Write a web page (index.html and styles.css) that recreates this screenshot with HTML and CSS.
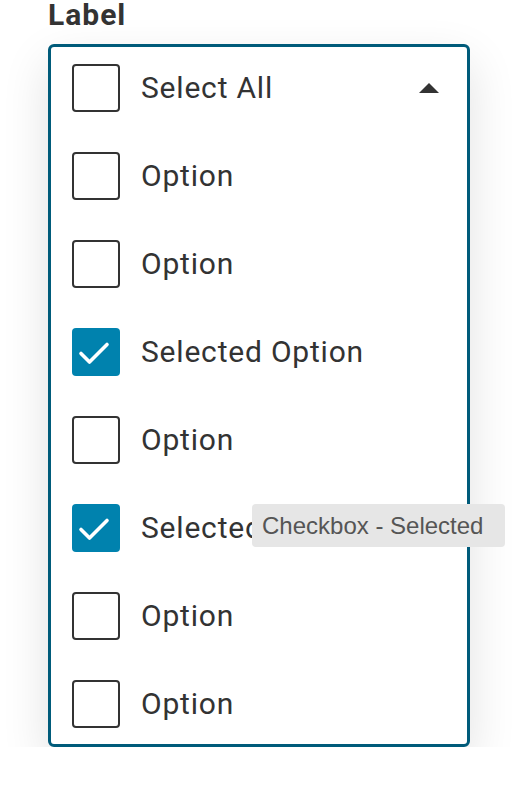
FILE: index.html
```html
<!DOCTYPE html>
<html>
<head>
<meta charset="utf-8">
<link rel="stylesheet" href="styles.css">
</head>
<body>
<div class="field">
  <div class="label">Label</div>
  <div class="menu">
    <div class="row">
      <span class="box"></span><span class="text">Select All</span>
      <span class="caret"></span>
    </div>
    <div class="row"><span class="box"></span><span class="text">Option</span></div>
    <div class="row"><span class="box"></span><span class="text">Option</span></div>
    <div class="row"><span class="box checked"><svg viewBox="0 0 48 48" width="48" height="48"><path d="M9 25.5 L17.5 34 L35 16.5" fill="none" stroke="#fff" stroke-width="3.6" stroke-linecap="round" stroke-linejoin="round"/></svg></span><span class="text">Selected Option</span></div>
    <div class="row"><span class="box"></span><span class="text">Option</span></div>
    <div class="row tip-row"><span class="box checked"><svg viewBox="0 0 48 48" width="48" height="48"><path d="M9 25.5 L17.5 34 L35 16.5" fill="none" stroke="#fff" stroke-width="3.6" stroke-linecap="round" stroke-linejoin="round"/></svg></span><span class="text">Selected Option</span>
      <span class="tooltip">Checkbox - Selected</span>
    </div>
    <div class="row"><span class="box"></span><span class="text">Option</span></div>
    <div class="row"><span class="box"></span><span class="text">Option</span></div>
  </div>
</div>
</body>
</html>
```

FILE: styles.css
```css
html, body {
  margin: 0;
  padding: 0;
  background: #fff;
}
body {
  font-family: Roboto, "Liberation Sans", sans-serif;
  color: #333;
}
.field {
  padding-left: 48px;
  width: 422px;
}
.label {
  font-size: 30px;
  font-weight: 700;
  letter-spacing: 1px;
  line-height: 30px;
  height: 44px;
  color: #333;
}
.menu {
  box-sizing: border-box;
  width: 422px;
  border: 3px solid #005b7a;
  border-radius: 6px;
  background: #fff;
  box-shadow: 0 18px 48px rgba(0,0,0,0.12);
  padding: 17px 0 16px 21px;
  display: flex;
  flex-direction: column;
  gap: 40px;
}
.row {
  position: relative;
  display: flex;
  align-items: center;
  height: 48px;
}
.box {
  box-sizing: border-box;
  width: 48px;
  height: 48px;
  border: 2px solid #333;
  border-radius: 4px;
  flex: none;
  display: flex;
}
.box.checked {
  border: none;
  background: #0082ae;
}
.text {
  margin-left: 21px;
  font-size: 30px;
  letter-spacing: 0.8px;
  line-height: 34px;
  color: #333;
}
.caret {
  margin-left: auto;
  margin-right: 28px;
  width: 0;
  height: 0;
  border-left: 10px solid transparent;
  border-right: 10px solid transparent;
  border-bottom: 10px solid #333;
  margin-top: -1px;
}
.tooltip {
  position: absolute;
  left: 180px;
  top: 0;
  height: 43px;
  line-height: 43px;
  padding: 0 22px 0 10px;
  background: #e6e6e6;
  border-radius: 4px;
  font-family: "Liberation Sans", Arial, sans-serif;
  font-size: 24px;
  color: #555;
  white-space: nowrap;
}
```
